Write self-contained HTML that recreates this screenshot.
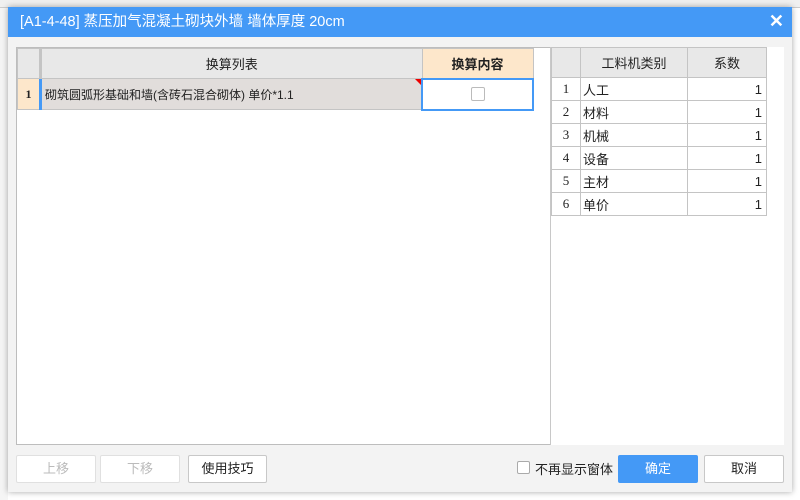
<!DOCTYPE html>
<html><head><meta charset="utf-8"><style>
*{box-sizing:border-box;margin:0;padding:0}
body{width:800px;height:500px;overflow:hidden;background:#fff;font-family:"Liberation Sans","Noto Sans CJK SC",sans-serif;position:relative;font-size:12px;color:#222}
.bgtop{position:absolute;left:0;top:0;width:800px;height:8px;background:#f0f0f0;border-bottom:1px solid #ccc}
.bgleft{position:absolute;left:0;top:8px;width:8px;height:492px;background:#f5f5f5}
.dlg{position:absolute;left:8px;top:7px;width:784px;height:485px;background:#f3f3f3;box-shadow:0 0 6px rgba(0,0,0,.35)}
.title{height:30px;background:#4499f6;color:#fff;font-size:14.5px;line-height:30px;padding-left:12px}
.x{position:absolute;right:8px;top:4px;color:#fff;font-size:18px;font-weight:bold}
.lt{position:absolute;left:8px;top:40px;width:535px;height:398px;background:#fff;border:1px solid #bdbdbd}
.rt{position:absolute;left:542px;top:40px;width:234px;height:398px;background:#fff;border-left:1px solid #c8c8c8}
table{border-collapse:collapse}
td{border:1px solid #c4c4c4;font-size:12px}
.h{background:#e8e8e8;height:30px;text-align:center;font-size:13px}
.rt td{font-size:13px}
.n{text-align:center;font-family:"Liberation Serif",serif}
.btn{position:absolute;top:448px;height:28px;border:1px solid #d0d0d0;background:#fff;border-radius:2px;text-align:center;line-height:26px;font-size:13px}
</style></head><body>
<div class="bgtop"></div><div class="bgleft"></div>
<div class="dlg">
<div class="title">[A1-4-48] 蒸压加气混凝土砌块外墙 墙体厚度 20cm</div>
<div class="x">✕</div>
<div class="lt">
<table style="width:517px">
<tr><td class="h" style="width:23px;border-right:3px solid #c4c4c4"></td><td class="h">换算列表</td><td class="h" style="width:111px;background:#fde7cb;font-weight:bold">换算内容</td></tr>
<tr style="height:31px"><td style="background:#fde7cb;text-align:center;font-weight:bold;font-family:'Liberation Serif',serif;border-right:3px solid #4499f6">1</td><td style="background:#e1dddb;padding-left:3px;position:relative">砌筑圆弧形基础和墙(含砖石混合砌体) 单价*1.1<span style="position:absolute;right:0;top:0;border-top:6px solid #e00;border-left:6px solid transparent"></span></td><td style="border:2px solid #4499f6;text-align:center"><span style="display:inline-block;width:14px;height:14px;border:1px solid #bbb;border-radius:2px;vertical-align:middle"></span></td></tr>
</table>
</div>
<div class="rt">
<table style="width:216px">
<tr><td class="h" style="width:29px"></td><td class="h" style="width:107px">工料机类别</td><td class="h">系数</td></tr>
<tr style="height:23px"><td class="n">1</td><td style="padding-left:2px">人工</td><td style="text-align:right;padding-right:4px">1</td></tr>
<tr style="height:23px"><td class="n">2</td><td style="padding-left:2px">材料</td><td style="text-align:right;padding-right:4px">1</td></tr>
<tr style="height:23px"><td class="n">3</td><td style="padding-left:2px">机械</td><td style="text-align:right;padding-right:4px">1</td></tr>
<tr style="height:23px"><td class="n">4</td><td style="padding-left:2px">设备</td><td style="text-align:right;padding-right:4px">1</td></tr>
<tr style="height:23px"><td class="n">5</td><td style="padding-left:2px">主材</td><td style="text-align:right;padding-right:4px">1</td></tr>
<tr style="height:23px"><td class="n">6</td><td style="padding-left:2px">单价</td><td style="text-align:right;padding-right:4px">1</td></tr>
</table>
</div>
<div class="btn" style="left:8px;width:80px;color:#bbb;border-color:#e0e0e0">上移</div>
<div class="btn" style="left:92px;width:80px;color:#bbb;border-color:#e0e0e0">下移</div>
<div class="btn" style="left:180px;width:79px;color:#222;border-color:#c8c8c8">使用技巧</div>
<div style="position:absolute;left:509px;top:454px;width:13px;height:13px;border:1px solid #aaa;border-radius:2px;background:#fff"></div>
<div style="position:absolute;left:527px;top:452px;font-size:13px">不再显示窗体</div>
<div class="btn" style="left:610px;width:80px;background:#4499f6;border-color:#4499f6;color:#fff">确定</div>
<div class="btn" style="left:696px;width:80px;border-color:#c8c8c8">取消</div>
</div>
</body></html>
